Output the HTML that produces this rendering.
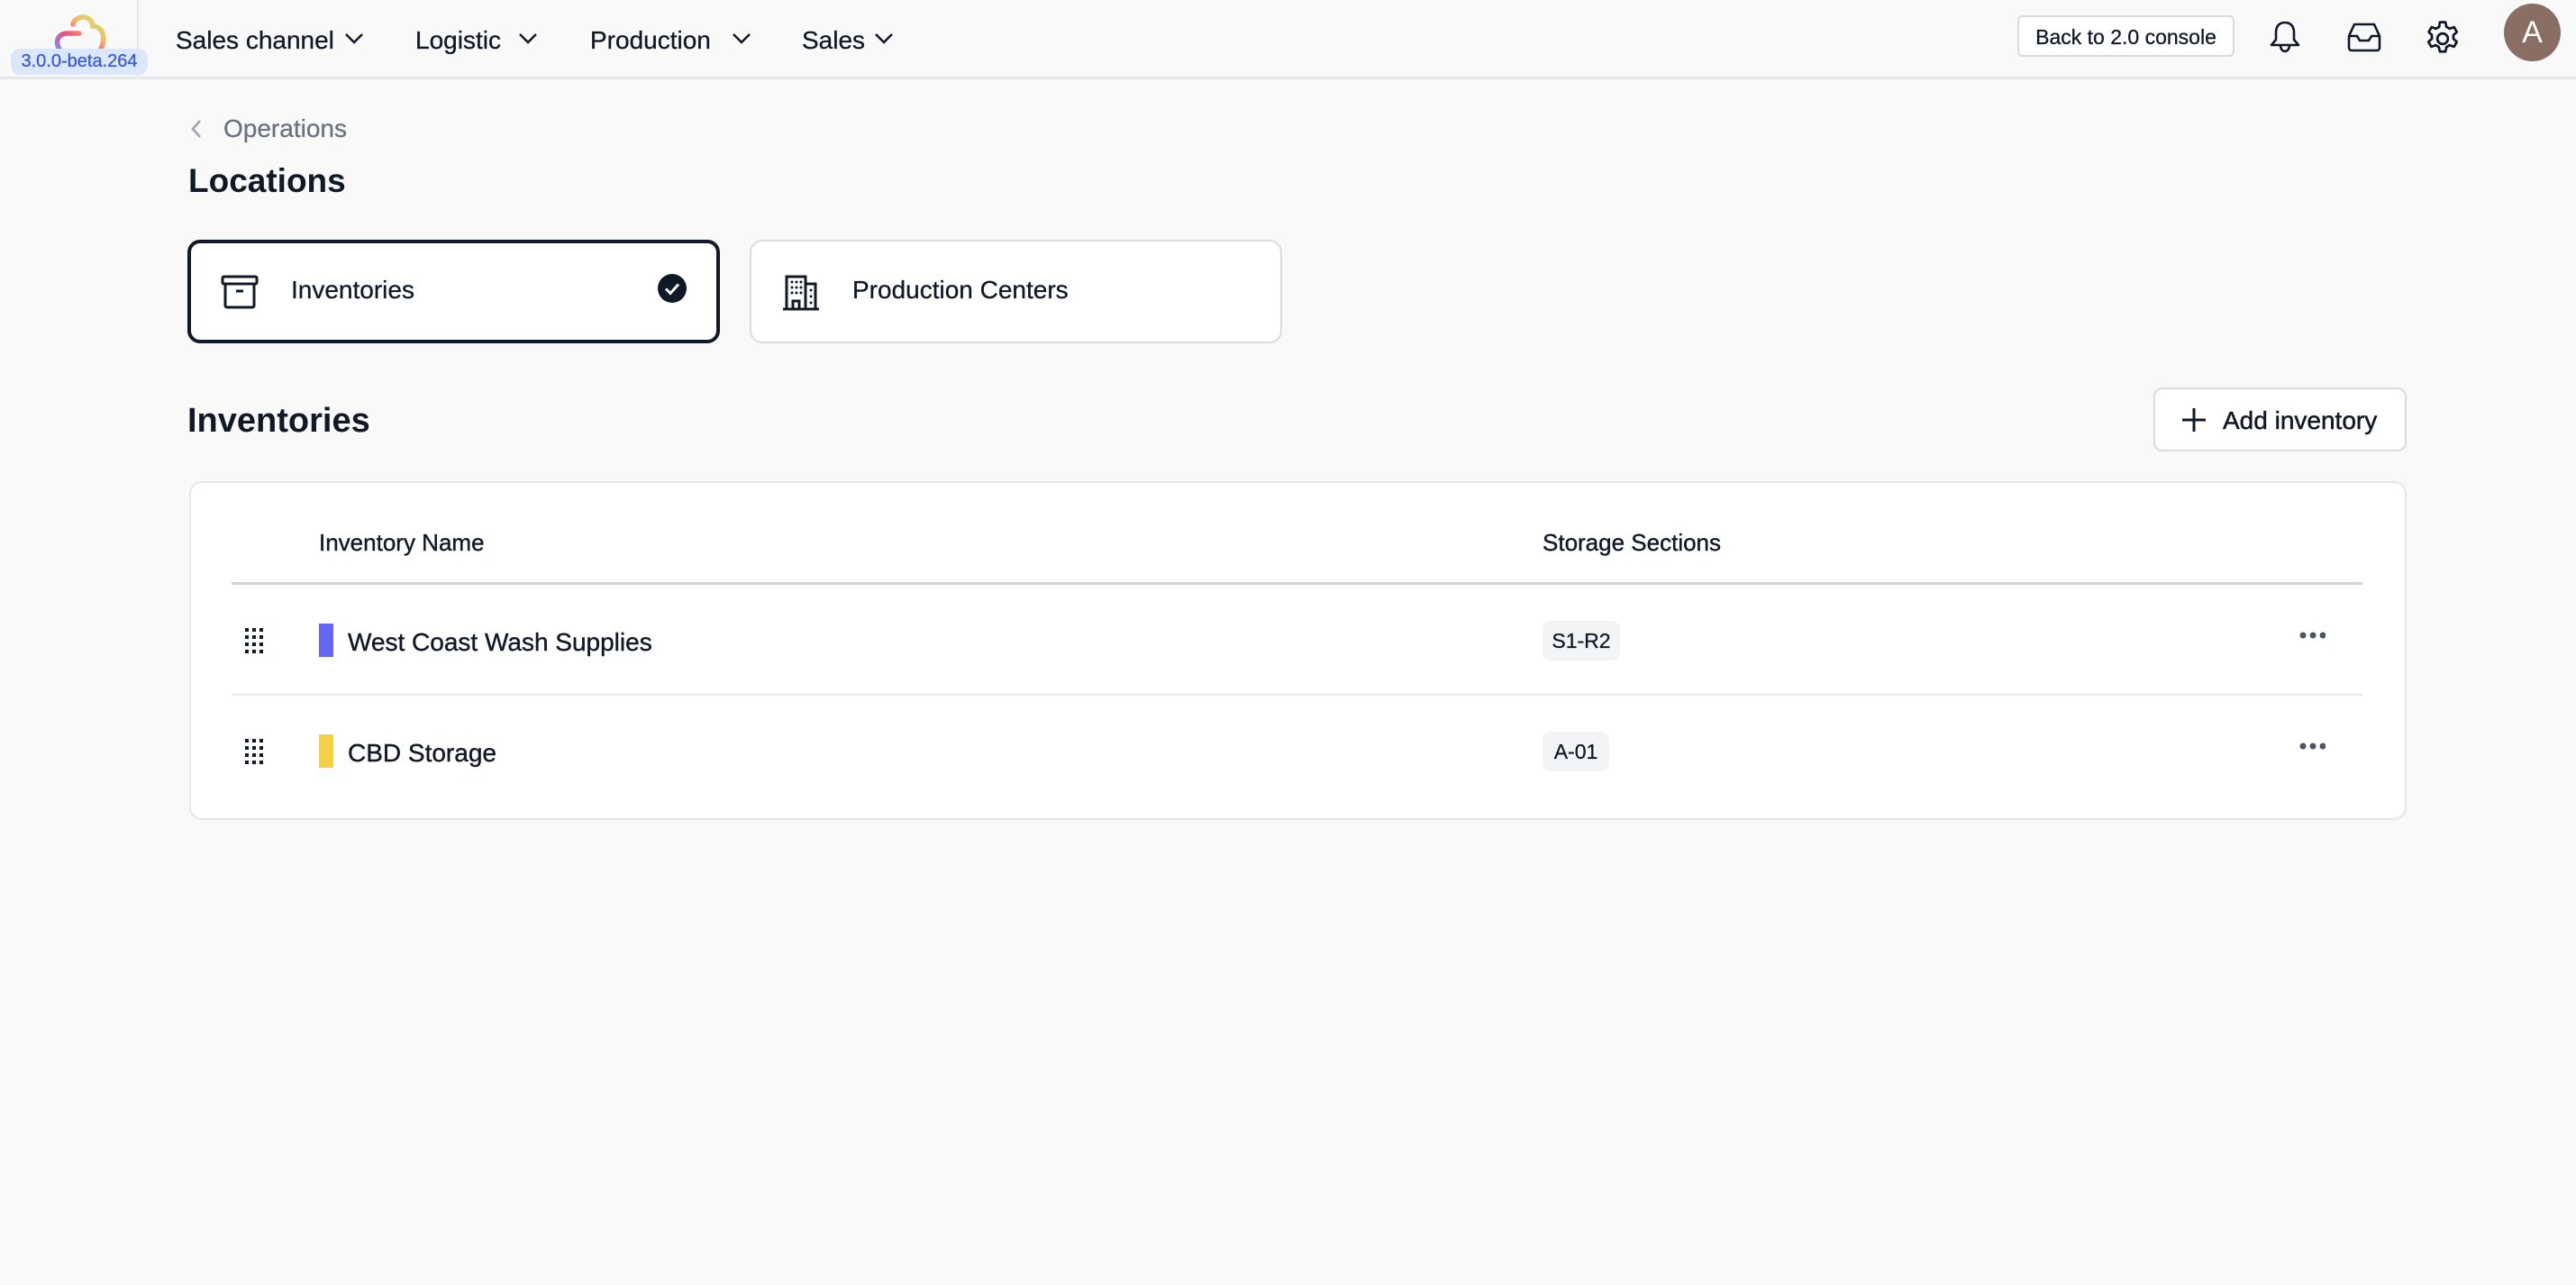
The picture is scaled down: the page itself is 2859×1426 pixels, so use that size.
<!DOCTYPE html>
<html><head><meta charset="utf-8"><style>
*{margin:0;padding:0;box-sizing:border-box}
body{width:2859px;height:1426px;background:#f9f9f9;font-family:"Liberation Sans",sans-serif;color:#111827;position:relative;overflow:hidden}
.a{position:absolute;white-space:nowrap}
.nav{font-size:28px;top:29px;color:#111827;-webkit-text-stroke:0.3px #111827}
.chev{position:absolute;top:36px}
</style></head><body>
<!-- header -->
<div class="a" style="left:0;top:0;width:2859px;height:88px;border-bottom:3px solid #e5e7eb;background:#f9f9f9"></div>
<div class="a" style="left:152px;top:0;width:2px;height:88px;background:#e5e7eb"></div>
<svg class="a" style="left:56px;top:14px" width="66" height="46" viewBox="0 0 66 46">
<defs><linearGradient id="g" x1="0" y1="1" x2="1" y2="0"><stop offset="0" stop-color="#818cf8"/><stop offset=".35" stop-color="#f0507a"/><stop offset=".65" stop-color="#f6b36c"/><stop offset="1" stop-color="#c6f36a"/></linearGradient></defs>
<path d="M11 42 C4 33 8 23 19 23 L32 23 M25 13 C28 2 46 2 47 15 C58 15 62 28 56 40" fill="none" stroke="url(#g)" stroke-width="5.5" stroke-linecap="round"/>
</svg>
<div class="a" style="left:12px;top:54px;width:152px;height:29px;background:#dbe7fd;border-radius:10px;color:#3b5bdb;font-size:20px;line-height:29px;text-align:center;-webkit-text-stroke:0.3px #3b5bdb">3.0.0-beta.264</div>

<div class="a nav" style="left:195px">Sales channel</div>
<svg class="chev" style="left:382px" width="22" height="14"><path d="M2 2l9 9 9-9" fill="none" stroke="#111827" stroke-width="2.5"/></svg>
<div class="a nav" style="left:461px">Logistic</div>
<svg class="chev" style="left:575px" width="22" height="14"><path d="M2 2l9 9 9-9" fill="none" stroke="#111827" stroke-width="2.5"/></svg>
<div class="a nav" style="left:655px">Production</div>
<svg class="chev" style="left:812px" width="22" height="14"><path d="M2 2l9 9 9-9" fill="none" stroke="#111827" stroke-width="2.5"/></svg>
<div class="a nav" style="left:890px">Sales</div>
<svg class="chev" style="left:970px" width="22" height="14"><path d="M2 2l9 9 9-9" fill="none" stroke="#111827" stroke-width="2.5"/></svg>

<div class="a" style="left:2239px;top:17px;width:241px;height:46px;background:#fff;border:2px solid #d9dbe0;border-radius:6px;font-size:23px;line-height:44px;text-align:center;-webkit-text-stroke:0.3px #111827">Back to 2.0 console</div>
<svg class="a" style="left:2518px;top:22px" width="36" height="38" viewBox="0 0 36 38" fill="none" stroke="#111827" stroke-width="2.6" stroke-linejoin="round"><path d="M18 3c-7 0-10 5-10 11v8l-5 6h30l-5-6v-8c0-6-3-11-10-11z"/><path d="M13 28c0 5 3 7 5 7s5-2 5-7"/></svg>
<svg class="a" style="left:2604px;top:24px" width="40" height="34" viewBox="0 0 40 34" fill="none" stroke="#111827" stroke-width="2.6" stroke-linejoin="round"><path d="M9 3h22l6 13v13a3 3 0 0 1-3 3H6a3 3 0 0 1-3-3V16z"/><path d="M3 16h9l3 5h10l3-5h9"/></svg>
<svg class="a" style="left:2689px;top:21px" width="44" height="44" viewBox="0 0 24 24" fill="none" stroke="#111827" stroke-width="1.5" stroke-linejoin="round"><path d="M10.3 2h3.4l.6 2.8 1.9 1.1 2.7-.9 1.7 2.9-2.1 1.9v2.2l2.1 1.9-1.7 2.9-2.7-.9-1.9 1.1-.6 2.8h-3.4l-.6-2.8-1.9-1.1-2.7.9-1.7-2.9 2.1-1.9V9.8L3.6 7.9l1.7-2.9 2.7.9 1.9-1.1z"/><circle cx="12" cy="12" r="3.2"/></svg>
<div class="a" style="left:2779px;top:4px;width:63px;height:64px;border-radius:50%;background:#8b6e63;color:#fff;font-size:34px;line-height:64px;text-align:center">A</div>

<!-- breadcrumb -->
<svg class="a" style="left:211px;top:132px" width="14" height="22"><path d="M11 2L3 11l8 9" fill="none" stroke="#9ca3af" stroke-width="2.5"/></svg>
<div class="a" style="left:248px;top:127px;font-size:28px;color:#6b7280;-webkit-text-stroke:0.3px #6b7280">Operations</div>
<div class="a" style="left:209px;top:180px;font-size:37px;font-weight:bold">Locations</div>

<!-- cards -->
<div class="a" style="left:208px;top:266px;width:591px;height:115px;background:#fff;border:4px solid #111827;border-radius:14px"></div>
<svg class="a" style="left:244px;top:304px" width="44" height="40" viewBox="0 0 44 40" fill="none" stroke="#111827" stroke-width="3" stroke-linejoin="round"><rect x="3" y="3" width="38" height="8" rx="1.5"/><path d="M6 11v24a2 2 0 0 0 2 2h28a2 2 0 0 0 2-2V11"/><path d="M18 19h8"/></svg>
<div class="a" style="left:323px;top:306px;font-size:28px;-webkit-text-stroke:0.3px #111827">Inventories</div>
<svg class="a" style="left:729px;top:303px" width="34" height="34" viewBox="0 0 34 34"><circle cx="17" cy="17" r="16" fill="#111827"/><path d="M10 17.5l5 5 9-10" fill="none" stroke="#fff" stroke-width="3"/></svg>

<div class="a" style="left:832px;top:266px;width:591px;height:115px;background:#fff;border:2px solid #d9dbe0;border-radius:14px"></div>
<svg class="a" style="left:867px;top:302px" width="44" height="44" viewBox="0 0 44 44" fill="none" stroke="#111827" stroke-width="3"><path d="M2 41h40"/><path d="M6 41V5h21v36"/><path d="M27 13h11v28"/><path d="M13 41v-9h7v9"/><g stroke-width="3" stroke-linecap="round"><path d="M12 11h0M17 11h0M22 11h0M12 17h0M17 17h0M22 17h0M12 23h0M17 23h0M22 23h0M33 20h0M33 27h0M33 34h0"/></g></svg>
<div class="a" style="left:946px;top:306px;font-size:28px;-webkit-text-stroke:0.3px #111827">Production Centers</div>

<!-- section header -->
<div class="a" style="left:208px;top:446px;font-size:38px;font-weight:bold">Inventories</div>
<div class="a" style="left:2390px;top:430px;width:281px;height:71px;background:#fff;border:2px solid #d9dbe0;border-radius:10px"></div>
<svg class="a" style="left:2420px;top:451px" width="30" height="30"><path d="M15 2v26M2 15h26" stroke="#111827" stroke-width="3"/></svg>
<div class="a" style="left:2467px;top:451px;font-size:28px;-webkit-text-stroke:0.5px #111827">Add inventory</div>

<!-- table -->
<div class="a" style="left:210px;top:534px;width:2461px;height:376px;background:#fff;border:2px solid #e5e7eb;border-radius:14px"></div>
<div class="a" style="left:354px;top:587px;font-size:26px;-webkit-text-stroke:0.4px #111827">Inventory Name</div>
<div class="a" style="left:1712px;top:587px;font-size:26px;-webkit-text-stroke:0.4px #111827">Storage Sections</div>
<div class="a" style="left:257px;top:646px;width:2365px;height:3px;background:#d1d5db"></div>
<div class="a" style="left:257px;top:770px;width:2365px;height:2px;background:#e5e7eb"></div>

<svg class="a" style="left:272px;top:697px" width="22" height="28"><g fill="#111827"><rect x="0" y="0" width="4" height="4"/><rect x="8" y="0" width="4" height="4"/><rect x="16" y="0" width="4" height="4"/><rect x="0" y="8" width="4" height="4"/><rect x="8" y="8" width="4" height="4"/><rect x="16" y="8" width="4" height="4"/><rect x="0" y="16" width="4" height="4"/><rect x="8" y="16" width="4" height="4"/><rect x="16" y="16" width="4" height="4"/><rect x="0" y="24" width="4" height="4"/><rect x="8" y="24" width="4" height="4"/><rect x="16" y="24" width="4" height="4"/></g></svg>
<div class="a" style="left:354px;top:692px;width:16px;height:37px;background:#6366f1"></div>
<div class="a" style="left:386px;top:697px;font-size:28px;-webkit-text-stroke:0.4px #111827">West Coast Wash Supplies</div>
<div class="a" style="left:1712px;top:689px;width:86px;height:44px;background:#f3f4f6;border-radius:9px;font-size:23px;line-height:44px;text-align:center;-webkit-text-stroke:0.3px #111827">S1-R2</div>
<svg class="a" style="left:2549px;top:698px" width="32" height="14"><g fill="#4b5563"><circle cx="7" cy="7" r="3.5"/><circle cx="18" cy="7" r="3.5"/><circle cx="29" cy="7" r="3.5"/></g></svg>

<svg class="a" style="left:272px;top:820px" width="22" height="28"><g fill="#111827"><rect x="0" y="0" width="4" height="4"/><rect x="8" y="0" width="4" height="4"/><rect x="16" y="0" width="4" height="4"/><rect x="0" y="8" width="4" height="4"/><rect x="8" y="8" width="4" height="4"/><rect x="16" y="8" width="4" height="4"/><rect x="0" y="16" width="4" height="4"/><rect x="8" y="16" width="4" height="4"/><rect x="16" y="16" width="4" height="4"/><rect x="0" y="24" width="4" height="4"/><rect x="8" y="24" width="4" height="4"/><rect x="16" y="24" width="4" height="4"/></g></svg>
<div class="a" style="left:354px;top:815px;width:16px;height:37px;background:#f5cf45"></div>
<div class="a" style="left:386px;top:820px;font-size:28px;-webkit-text-stroke:0.4px #111827">CBD Storage</div>
<div class="a" style="left:1712px;top:812px;width:74px;height:44px;background:#f3f4f6;border-radius:9px;font-size:23px;line-height:44px;text-align:center;-webkit-text-stroke:0.3px #111827">A-01</div>
<svg class="a" style="left:2549px;top:821px" width="32" height="14"><g fill="#4b5563"><circle cx="7" cy="7" r="3.5"/><circle cx="18" cy="7" r="3.5"/><circle cx="29" cy="7" r="3.5"/></g></svg>
</body></html>
